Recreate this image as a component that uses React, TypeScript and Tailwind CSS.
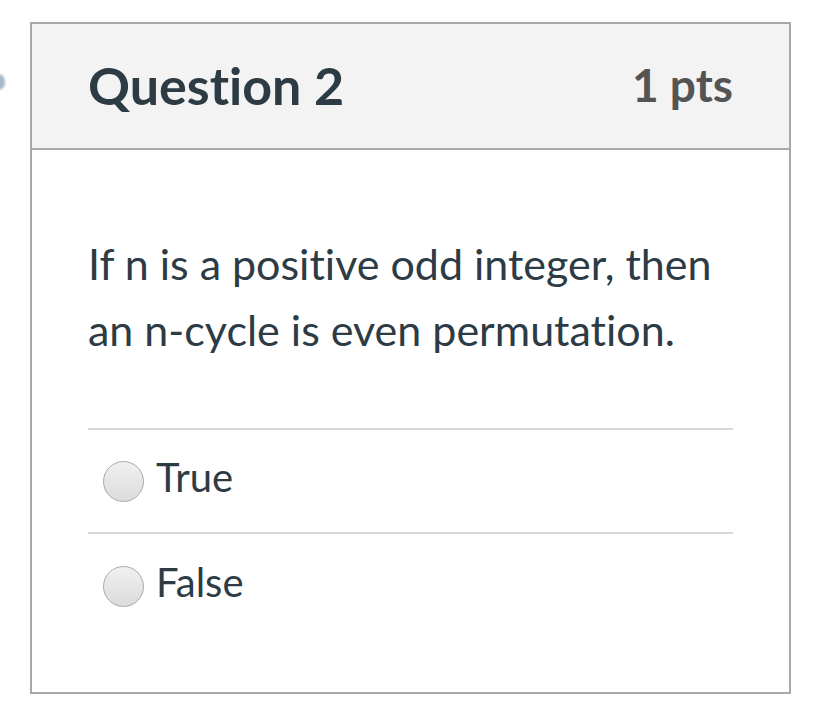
export default function App() {
  return (
    <div className="relative min-h-[720px] bg-white pt-[22px] font-['Lato',sans-serif] text-[#2d3b45] [font-variant-ligatures:none]">
      <div className="absolute left-[-9px] top-[74px] w-[14px] h-[16px] rounded-full bg-[#a9b8c6] blur-[1px]" />
      <div className="ml-[30px] w-[761px] h-[672px] border-2 border-[#a8a8a8] flex flex-col">
        <div className="h-[126px] bg-[#f3f3f3] border-b-2 border-[#a8a8a8] px-[56px] pb-[3px] flex items-center justify-between">
          <h2 className="text-[52px] font-bold leading-none">Question 2</h2>
          <span className="text-[46px] font-bold leading-none text-[#545454]">1 pts</span>
        </div>
        <div className="px-[56px] pt-[81px]">
          <p className="text-[43px] leading-[66px]">If n is a positive odd integer, then an n-cycle is even permutation.</p>
          <div className="mt-[65px] border-t-2 border-[#d9d9d9]">
            {['True', 'False'].map((label, i) => (
              <div key={label} className={`h-[104px] flex items-center gap-[12px] pl-[15px] ${i === 0 ? 'border-b-2 border-[#d9d9d9]' : ''}`}>
                <span className="w-[41px] h-[41px] rounded-full border border-[#a9a9a9] bg-gradient-to-b from-[#f0f0f0] to-[#dcdcdc]" />
                <span className="text-[40px] leading-none pb-[9px]">{label}</span>
              </div>
            ))}
          </div>
        </div>
      </div>
    </div>
  )
}
